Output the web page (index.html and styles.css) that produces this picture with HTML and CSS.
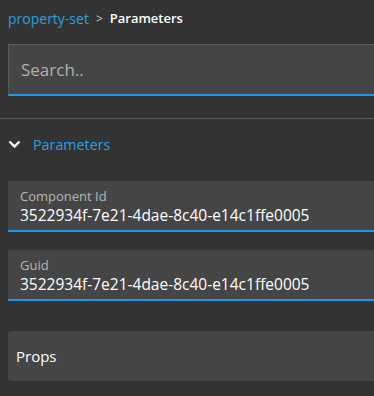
FILE: index.html
```html
<!DOCTYPE html>
<html lang="en">
<head>
    <meta charset="UTF-8">
    <title>Parameters</title>
    <link rel="stylesheet" href="styles.css">
</head>
<body>
<div class="page">
    <div class="crumbs">
        <a class="crumb-link">property-set</a>
        <span class="crumb-sep">&gt;</span>
        <span class="crumb-current">Parameters</span>
    </div>

    <div class="search">
        <input type="text" placeholder="Search..">
    </div>

    <hr class="divider">

    <div class="section-head">
        <svg class="chevron" width="13" height="9" viewBox="0 0 13 9">
            <path d="M1.5 1.5 L6.5 6.5 L11.5 1.5" fill="none" stroke="#ffffff" stroke-width="2.4"/>
        </svg>
        <span class="section-title">Parameters</span>
    </div>

    <div class="field">
        <div class="field-label">Component Id</div>
        <div class="field-value">3522934f-7e21-4dae-8c40-e14c1ffe0005</div>
    </div>

    <div class="field">
        <div class="field-label">Guid</div>
        <div class="field-value">3522934f-7e21-4dae-8c40-e14c1ffe0005</div>
    </div>

    <div class="group">
        <span class="group-title">Props</span>
    </div>
</div>
</body>
</html>
```

FILE: styles.css
```css
html, body {
    margin: 0;
    background-color: #333333;
    overflow: hidden;
}
body {
    font-family: "Open Sans", sans-serif;
    color: #ffffff;
}
.page {
    height: 396px;
}
.crumbs {
    display: flex;
    align-items: center;
    gap: 7px;
    padding: 8px 8px 0 8px;
    height: 20px;
    font-size: 14px;
}
.crumb-link {
    color: #2a9fe0;
}
.crumb-sep {
    color: #cccccc;
    font-size: 12px;
}
.crumb-current {
    font-weight: 600;
    font-size: 13px;
}
.search {
    margin: 16px 0 0 8px;
    height: 49px;
    background-color: #454545;
    border: 1px solid #5a5a5a;
    border-right: none;
    border-bottom: 2px solid #1e96e6;
    display: flex;
    align-items: center;
}
.search input {
    flex: 1;
    min-width: 0;
    background: transparent;
    border: none;
    outline: none;
    color: #ffffff;
    font-family: "Open Sans", sans-serif;
    font-size: 17px;
    padding: 0 0 0 12px;
}
.search input::placeholder {
    color: #b0b0b0;
}
.divider {
    margin: 22px 0 0 0;
    border: none;
    border-top: 1px solid #5a5a5a;
    height: 0;
}
.section-head {
    display: flex;
    align-items: center;
    height: 50px;
    padding-left: 8px;
    gap: 12px;
}
.section-title {
    color: #2a9fe0;
    font-size: 14.3px;
}
.field {
    margin: 12px 0 0 8px;
    height: 49px;
    background-color: #454545;
    border-bottom: 2px solid #1e96e6;
    padding-left: 12px;
    display: flex;
    flex-direction: column;
    justify-content: center;
}
.field + .field {
    margin-top: 18px;
}
.field-label {
    color: #b5b5b5;
    font-size: 13px;
    line-height: 18px;
    padding-top: 2px;
}
.field-value {
    font-size: 15.5px;
    line-height: 21px;
}
.group {
    margin: 30px 0 0 8px;
    height: 50px;
    background-color: #454545;
    border-radius: 3px 0 0 3px;
    padding-left: 8px;
    display: flex;
    align-items: center;
}
.group-title {
    font-size: 15px;
}
```
